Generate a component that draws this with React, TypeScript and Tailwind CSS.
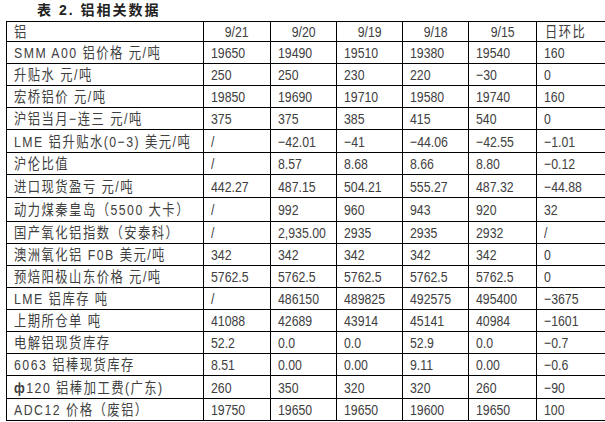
import React from 'react';

const FONT = "font-['Liberation_Sans','Noto_Sans_CJK_SC',sans-serif]";

const dates = ['9/21', '9/20', '9/19', '9/18', '9/15'];

// 列宽
const colW = ['w-[197px]', 'w-[67px]', 'w-[66px]', 'w-[66px]', 'w-[66px]', 'w-[68px]', 'w-[70px]'];

interface IRow {
  label: React.ReactNode;
  vals: string[];
  h: string;
}

const rows: IRow[] = [
  { label: 'SMM A00 铝价格 元/吨', vals: ['19650', '19490', '19510', '19380', '19540', '160'], h: 'h-[22px]' },
  { label: '升贴水 元/吨', vals: ['250', '250', '230', '220', '−30', '0'], h: 'h-[22px]' },
  { label: '宏桥铝价 元/吨', vals: ['19850', '19690', '19710', '19580', '19740', '160'], h: 'h-[22px]' },
  { label: '沪铝当月−连三 元/吨', vals: ['375', '375', '385', '415', '540', '0'], h: 'h-[22px]' },
  { label: 'LME 铝升贴水(0−3) 美元/吨', vals: ['/', '−42.01', '−41', '−44.06', '−42.55', '−1.01'], h: 'h-[23px]' },
  { label: '沪伦比值', vals: ['/', '8.57', '8.68', '8.66', '8.80', '−0.12'], h: 'h-[22px]' },
  { label: '进口现货盈亏 元/吨', vals: ['442.27', '487.15', '504.21', '555.27', '487.32', '−44.88'], h: 'h-[23px]' },
  { label: '动力煤秦皇岛（5500 大卡）', vals: ['/', '992', '960', '943', '920', '32'], h: 'h-[24px]' },
  { label: '国产氧化铝指数（安泰科）', vals: ['/', '2,935.00', '2935', '2935', '2932', '/'], h: 'h-[22px]' },
  { label: '澳洲氧化铝 F0B 美元/吨', vals: ['342', '342', '342', '342', '342', '0'], h: 'h-[22px]' },
  { label: '预焙阳极山东价格 元/吨', vals: ['5762.5', '5762.5', '5762.5', '5762.5', '5762.5', '0'], h: 'h-[22px]' },
  { label: 'LME 铝库存 吨', vals: ['/', '486150', '489825', '492575', '495400', '−3675'], h: 'h-[22px]' },
  { label: '上期所仓单 吨', vals: ['41088', '42689', '43914', '45141', '40984', '−1601'], h: 'h-[22px]' },
  { label: '电解铝现货库存', vals: ['52.2', '0.0', '0.0', '52.9', '0.0', '−0.7'], h: 'h-[22px]' },
  { label: '6063 铝棒现货库存', vals: ['8.51', '0.00', '0.00', '9.11', '0.00', '−0.6'], h: 'h-[22px]' },
  {
    label: (
      <>
        <span className="font-bold">ф</span>120 铝棒加工费(广东)
      </>
    ),
    vals: ['260', '350', '320', '320', '260', '−90'],
    h: 'h-[23px]',
  },
  { label: 'ADC12 价格（废铝）', vals: ['19750', '19650', '19650', '19600', '19650', '100'], h: 'h-[22px]' },
];

const Txt = ({ children, wide = false, center = false }: { children: React.ReactNode; wide?: boolean; center?: boolean }) => (
  <span
    className={`inline-block whitespace-nowrap text-[15px] leading-none scale-x-[0.82] ${center ? 'origin-center' : 'origin-left'} ${
      wide ? 'tracking-[1.8px]' : ''
    }`}
  >
    {children}
  </span>
);

export default function App() {
  return (
    <div className={`w-[605px] h-[422px] overflow-hidden bg-white text-[#404040] ${FONT}`}>
      <div className="h-[21px] pl-[37px] pt-[2px] text-[14px] leading-[16px] font-bold tracking-[2px] text-[#222]">
        表 2. 铝相关数据
      </div>
      <div className="ml-[6px] w-[600px]">
        {/* 表头 */}
        <div className="flex h-[21px] border-t border-b border-black">
          <div className={`${colW[0]} flex items-center px-[7px] border-l border-black`}>
            <Txt wide>铝</Txt>
          </div>
          {dates.map((d, idx) => (
            <div key={d} className={`${colW[idx + 1]} flex items-center justify-center border-l border-black`}>
              <Txt center>{d}</Txt>
            </div>
          ))}
          <div className={`${colW[6]} flex items-center px-[8px] border-l border-black`}>
            <Txt wide>日环比</Txt>
          </div>
        </div>
        {rows.map((row, idx) => (
          <div key={idx} className={`flex ${row.h} border-b border-black`}>
            <div className={`${colW[0]} flex items-center px-[7px] border-l border-black`}>
              <Txt wide>{row.label}</Txt>
            </div>
            {row.vals.map((v, i) => (
              <div key={i} className={`${colW[i + 1]} flex items-center px-[7px] border-l border-black`}>
                <Txt>{v}</Txt>
              </div>
            ))}
          </div>
        ))}
      </div>
    </div>
  );
}
